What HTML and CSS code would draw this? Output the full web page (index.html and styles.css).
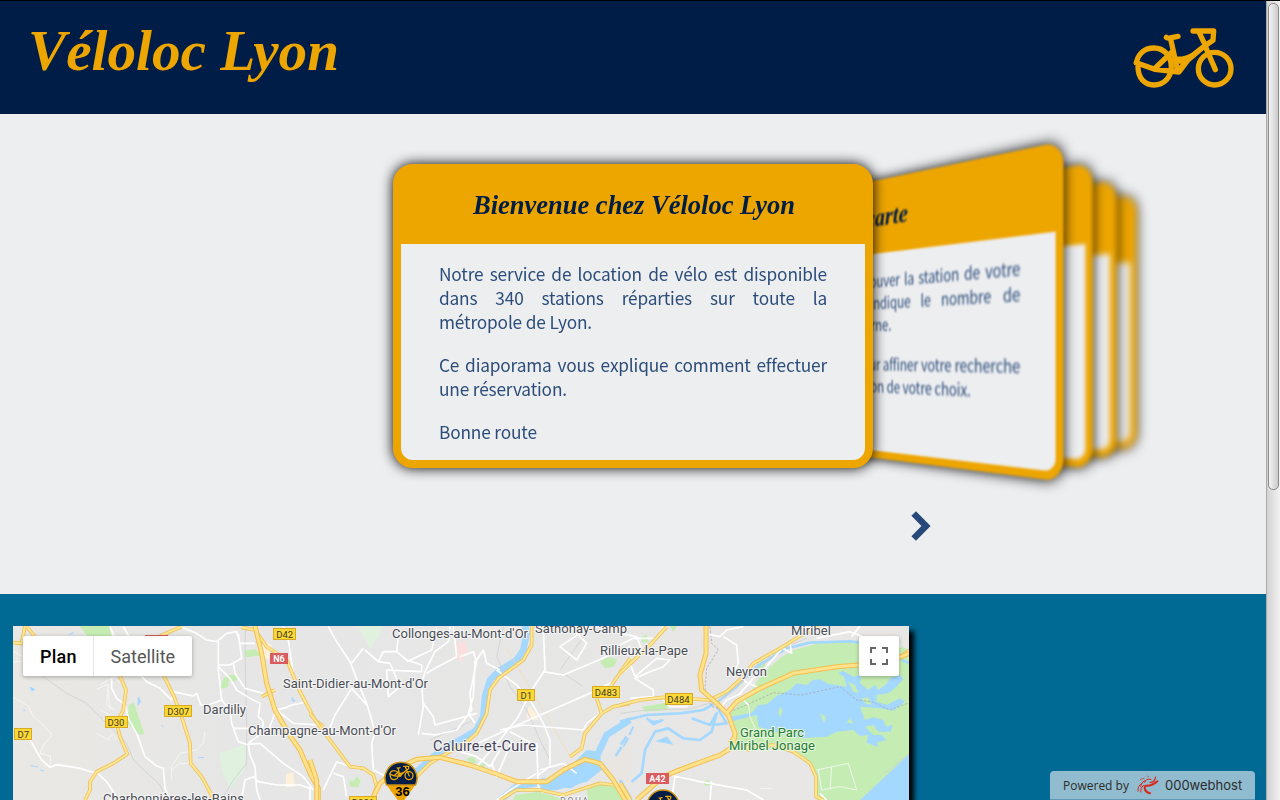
FILE: index.html
```html
<!DOCTYPE html>
<html lang="fr">
<head>
<meta charset="utf-8">
<title>Véloloc Lyon</title>
<link rel="stylesheet" href="styles.css">
</head>
<body>
<div class="window">
<div class="page">
  <header class="header">
    <h1 class="brand"><svg class="script" width="330" height="90" viewBox="0 0 330 90"><text x="15" y="57" textLength="311" lengthAdjust="spacingAndGlyphs">Véloloc Lyon</text></svg></h1>
    <svg class="bike" viewBox="100 80 306 186">
      <g id="bike" fill="none" stroke="#eda500" stroke-width="16" stroke-linecap="round" stroke-linejoin="round">
        <path d="M110 187C116 158 136 143 163 143C194 143 215 169 215 199C215 231 192 254 163 254C134 254 115 232 115 200"/>
        <circle cx="345" cy="205" r="49"/>
        <path d="M110 187L165 207L238 215L264 180L317 135L297 93M167 203L217 155M200 111Q205 115 216 112L235 108M213 116L233 207M226 176Q252 180 280 164L317 135M233 182H258L238 212M280 92H298L342 92L340 120L316 136L347 208"/>
      </g>
    </svg>
  </header>

  <section class="slider">
    <article class="card card-5"><div class="card-head"></div></article>
    <article class="card card-4"><div class="card-head"></div></article>
    <article class="card card-3"><div class="card-head"></div></article>
    <article class="card card-2">
      <h2 class="card-head"><svg class="script" width="480" height="80" viewBox="0 0 480 80"><text x="188" y="50" textLength="104" lengthAdjust="spacingAndGlyphs">La carte</text></svg></h2>
      <div class="card-body">
        <p><span class="full">La carte permet de retrouver la station de votre</span><span class="full">choix. Un marqueur indique le nombre de</span>vélos disponibles par borne.</p>
        <p><span class="full">Vous pouvez zoomer pour affiner votre recherche</span><span>puis sélectionner la station de votre choix.</span></p>
      </div>
    </article>
    <article class="card card-1">
      <h2 class="card-head"><svg class="script" width="480" height="80" viewBox="0 0 480 80"><text x="80" y="50" textLength="322" lengthAdjust="spacingAndGlyphs">Bienvenue chez Véloloc Lyon</text></svg></h2>
      <div class="card-body">
        <p><span class="full">Notre service de location de vélo est disponible</span><span class="full">dans 340 stations réparties sur toute la</span>métropole de Lyon.</p>
        <p><span class="full">Ce diaporama vous explique comment effectuer</span>une réservation.</p>
        <p>Bonne route</p>
      </div>
    </article>
    <svg class="next" viewBox="0 0 20 30"><path d="M2.700 2.500L15 15L2.700 27.500" fill="none" stroke="#26497a" stroke-width="6.500"/></svg>
  </section>

  <main class="booking">
    <div class="map">
      <svg class="tiles" viewBox="13 626 896 174">
        <defs>
          <linearGradient id="land" x1="0" x2="1"><stop offset="0" stop-color="#e9e8e4"/><stop offset=".25" stop-color="#e6e6e6"/><stop offset="1" stop-color="#e8e7e6"/></linearGradient>
        </defs>
        <rect x="13" y="626" width="896" height="174" fill="url(#land)"/>

        <!-- west -->
        <g transform="translate(0 610) scale(.33333)">
          <g fill="#c5edb3">
            <path d="M238 48H330L333 78H262Z"/>
            <path d="M386 284L402 279L432 368L428 376L410 370L384 340Z"/>
            <path d="M732 122L765 118L785 136L740 142ZM670 205L690 194L720 198L706 214L686 214L684 232L660 238Z"/>
          </g>
          <path d="M658 430L730 405L740 418L733 480L690 535L672 500Z" fill="#e0f2df"/>
          <path d="M785 90L815 105L808 150L785 140ZM858 492L880 487L885 530L858 532Z" fill="#fdf1dc"/>
          <path d="M90 232l14 6l-8 5zM415 262l7 12l-8 12zM876 262l9 12l-8 -2zM92 467l22 4M120 480l12 3M70 300l6 3M484 346l6 5M594 443h18M208 74l12-6z" fill="#a5d6ff" stroke="#a5d6ff" stroke-width="3"/>
          <g class="track"><path d="M130 200L200 250L260 280L310 330L380 400L400 450L480 525L500 570M737 50L735 130L740 350V460L700 510L670 560"/></g>
          <g class="lane">
            <path d="M40 262L85 288L100 320L130 345L157 375L130 405L120 430L152 438L150 470M300 225L340 202L370 225M290 238L325 222L320 285L345 300M300 300L325 312L310 330M325 240L330 300M290 370L325 390L335 372L350 385M615 365L610 400L590 420L540 430L515 470V508M515 480L535 462L565 460L568 445M40 125L70 140M40 155H70"/>
          </g>
          <g class="street">
            <path d="M90 390L125 450L150 472L170 464L240 475L295 492L320 515L340 545L355 570"/>
            <path d="M330 50L355 110L380 150L440 215L480 235L515 270L520 245L580 258L590 250L602 285L625 285L665 270L690 300L695 340L715 395L745 405L750 435L765 470L770 540L780 570"/>
            <path d="M370 50L410 120L440 200M335 205V235L350 265L375 285L385 325L410 370L435 440L470 468L490 475L495 535L510 570"/>
            <path d="M540 50L590 70L620 90L650 95L680 70L710 65L720 100H765M655 90V180L665 270M715 70L725 145L690 165H655M655 170L690 205L710 240L750 265L780 280L775 320L790 335L785 370L745 400M700 155L705 190L735 235L790 250M830 300L860 292L875 285L910 278M830 300L880 340L960 345M700 355H770L800 375L825 310M725 565L735 510L760 500L775 515L830 525L900 525L930 535L930 570M850 50L865 90L880 195M745 403L780 400L850 460L910 500L940 540"/>
          </g>
          <g class="road-o"><path d="M75 48L65 100L40 98M80 50L105 80M480 78L545 50M360 198L378 240L370 300L350 340L360 380L382 432L340 460L290 485L270 515V540L255 570M492 198L522 260L545 320L570 400L572 460L605 500L635 555V570M725 52L765 60L800 110L860 150L900 245L945 330L970 350M785 260L825 240"/></g>
          <g class="road"><path d="M75 48L65 100L40 98M80 50L105 80M480 78L545 50M360 198L378 240L370 300L350 340L360 380L382 432L340 460L290 485L270 515V540L255 570M492 198L522 260L545 320L570 400L572 460L605 500L635 555V570M725 52L765 60L800 110L860 150L900 245L945 330L970 350M785 260L825 240"/></g>
          <path class="hwy-o" d="M765 48L785 130L800 220L825 300L865 370L900 420L930 490L955 535V570"/>
          <path class="hwy" d="M765 48L785 130L800 220L825 300L865 370L900 420L930 490L955 535V570"/>
        </g>

        <!-- centre -->
        <g transform="translate(310 610) scale(.33333)">
          <path d="M145 48H218L210 75L180 115Z" fill="#e0f2df"/>
          <path d="M440 100L465 93L475 125L455 155L437 140Z" fill="#fbdfdf"/>
          <path d="M655 288L675 305L685 330L650 325Z" fill="#fdf1dc"/>
          <path d="M870 155L890 140L922 148L912 170L885 175ZM118 510L130 515L140 498L152 512L145 532L120 530ZM470 445L492 440L500 460L480 460ZM510 462L527 460L522 478ZM615 555L690 545L750 565V570H610ZM830 540L860 520L920 525L935 540L960 548V570H835Z" fill="#c5edb3"/>
          <path d="M890 470L960 380V560L930 520Z" fill="#e9e6e2"/>
          <path class="river" d="M645 45L650 70L640 120L620 150L565 185L540 210L525 260L520 320L500 360L460 385L410 410L370 440L320 485L270 540"/>
          <path class="river" d="M570 570L620 530L700 515L780 525L840 490L860 440L890 375L960 330"/>
          <path d="M690 530L735 500L790 460L830 420L870 425L875 480L830 515L740 540L670 545Z" fill="#a5d8fe"/>
          <path d="M950 380l-18 24M935 410l-18 28" stroke="#a5d8fe" stroke-width="8"/>
          <g class="track"><path d="M580 50L560 140L600 230L650 300L690 390L720 450V480M360 390L450 350L490 330M750 180L835 60M760 190L820 230"/></g>
          <path d="M590 115L700 300L780 440" fill="none" stroke="#f0dfaa" stroke-width="2"/>
          <g class="street">
            <path d="M55 50L80 95L120 155L130 180L145 220L170 280L185 330L195 370L185 400L190 480L230 500M160 115L125 160M165 120L205 155L220 125H260L265 80L310 60M260 125L290 150L335 165L335 185L230 180L235 260L270 230L240 160L205 155"/>
            <path d="M380 55L365 120L290 155M420 50L415 95L375 125L345 185L335 220L340 290L325 375M430 50L440 140L375 175L350 190M450 140L490 125L500 155L480 250L485 300L440 360L375 375L335 370M500 150L520 120L530 160L570 180M495 150L490 260L475 310L495 340M340 280L370 320L375 345L500 310M55 365L75 315L125 235L175 290"/>
            <path d="M700 50L705 180L665 240L625 320L570 390L500 470M700 185L760 195L960 110M560 180L620 225L660 270L700 340L720 390V470L685 495M570 360L640 345L820 360L830 340L870 310M960 170L900 220L840 250L600 355L450 425L500 440L540 470L570 420M780 50L830 100L800 150L750 110L840 50M680 400L685 530L700 550M605 395L560 500L545 460M685 410L600 365M690 480L760 460L800 490M680 490L600 540L560 570M40 540L80 455L150 480M70 490L100 500L110 560"/>
          </g>
          <g class="road-o"><path d="M0 310L60 390L120 470L160 475L190 495L200 530L185 570M665 48V105L640 150L565 205L540 240L530 310L500 370L465 400L410 430L360 460L310 510M960 280L910 290L875 310L825 370L815 415L780 440M875 310L860 265M905 225L960 145M570 570L620 540H690L760 555L870 520L910 525"/></g>
          <g class="road"><path d="M0 310L60 390L120 470L160 475L190 495L200 530L185 570M665 48V105L640 150L565 205L540 240L530 310L500 370L465 400L410 430L360 460L310 510M960 280L910 290L875 310L825 370L815 415L780 440M875 310L860 265M905 225L960 145M570 570L620 540H690L760 555L870 520L910 525"/></g>
          <path class="hwy-o" d="M0 450L20 510V570M185 570L210 520L260 475L320 448L390 442L480 465L560 492L620 515H710L760 480L825 448L870 460L910 510L945 570"/>
          <path class="hwy" d="M0 450L20 510V570M185 570L210 520L260 475L320 448L390 442L480 465L560 492L620 515H710L760 480L825 448L870 460L910 510L945 570"/>
        </g>

        <!-- east -->
        <g transform="translate(620 610) scale(.33333)">
          <path d="M870 120L810 98L690 92L600 98L520 120L480 145L445 175L420 200L390 250L330 310L345 400L410 415L520 420L580 480L590 570H730L870 430Z" fill="#c5edb3"/>
          <path d="M65 290L140 278L145 300L75 305ZM62 80L80 75L85 95L68 98ZM150 48H170L160 65ZM250 515L265 509L275 525L255 528ZM410 160L435 152L438 170L410 180Z" fill="#c5edb3"/>
          <path d="M720 570L868 432V570Z" fill="#a5d8fe"/>
          <path d="M325 322L395 308L415 285L440 283L470 258L510 240L530 220L560 225L580 209L600 208L625 222L650 225L680 230L672 200L655 190L668 182L700 200L725 195L720 220L745 240L765 225L775 240L800 222L810 205L840 195L850 208L825 235L805 250L770 255L770 275L800 285L840 265L855 275L820 302L780 295L720 290L735 330L760 322L790 330L798 350L818 345L812 365L775 365L760 345L735 350L760 375L785 375L800 390L770 398L775 412L740 398L745 375L720 378L700 360L650 365L620 380L540 385L480 370L415 350L410 315L330 335Z" fill="#a5d8fe"/>
          <path d="M685 215L705 225L715 250L700 245ZM725 265L745 262L755 285L735 280ZM600 310L618 320L612 340ZM480 290L488 300L482 320L475 310ZM690 325L700 340L680 338Z" fill="#c5edb3"/>
          <path class="stream" d="M0 335L80 315L180 310L250 300L300 270L350 230L410 170L500 115L570 98L690 94L740 100L868 160"/>
          <path class="stream" d="M0 510L35 570M35 515L65 490L75 420L105 365L145 355L190 385L240 390L275 365L290 310L270 345L215 325M290 290L320 340L275 345"/>
          <path d="M40 350l-12 25M25 385l-15 25M80 325l18 10l32 -5l-30 14zM115 393l25 -10l13 17z" fill="#a5d8fe" stroke="#a5d8fe" stroke-width="6"/>
          <path d="M270 50L275 100L295 120L260 175L255 240L275 290L305 295L320 310L390 280L460 248L545 255L660 230L710 270L755 275L810 300L868 278" fill="none" stroke="#a8a8b5" stroke-width="2.500" stroke-dasharray="7 5"/>
          <path class="track" d="M0 310L80 300L210 297L300 270L420 170L500 110L560 85M870 430L795 490"/>
          <g class="street">
            <path d="M0 70L50 80L70 130L30 160L45 200L110 145L150 150L130 170L90 185L45 205L100 240V260L30 265M0 105L40 85L110 85L130 50M250 70L300 80L320 60L370 50M310 80L350 105L355 160L345 180L370 195L375 215L410 230M360 250L400 205L430 180L500 100M480 110L515 130L510 100M590 85L690 65L730 80L750 110L840 110M695 80L720 48M130 270L150 290H200L205 270M300 295L320 270L365 250M370 270L385 285M150 495L240 515L380 540L430 570M165 500L155 570M275 515L270 570M600 550L620 570"/>
          </g>
          <path class="lane" d="M385 280L390 320L410 365L445 400M590 480L685 460L710 540L660 530L605 540L595 480M635 470L630 540M420 535H455"/>
          <g class="road-o"><path d="M0 190L90 105L140 50M0 285L60 270L130 262L270 270L320 245L360 210L400 160L480 115L545 75L600 50M290 275L320 310M390 410L460 405L520 425L570 460L588 500V560L610 570M868 120L830 150"/></g>
          <g class="road"><path d="M0 190L90 105L140 50M0 285L60 270L130 262L270 270L320 245L360 210L400 160L480 115L545 75L600 50M290 275L320 310M390 410L460 405L520 425L570 460L588 500V560L610 570M868 120L830 150"/></g>
          <path class="hwy-o" d="M258 48V130L240 195L245 240L290 280L325 315L345 370L340 410L300 435L190 475L130 500L50 570M868 130L800 158L650 170L520 190L420 235L350 275L320 310M0 520L30 570M345 380L330 400M350 395L390 420"/>
          <path class="hwy" d="M258 48V130L240 195L245 240L290 280L325 315L345 370L340 410L300 435L190 475L130 500L50 570M868 130L800 158L650 170L520 190L420 235L350 275L320 310M0 520L30 570M345 380L330 400M350 395L390 420"/>
        </g>

        <g class="shield">
          <rect x="273.500" y="628.500" width="22" height="11"/><text x="284.700" y="637.600">D42</text>
          <rect x="164.500" y="705.500" width="27" height="11"/><text x="178.300" y="714.600">D307</text>
          <rect x="105.500" y="716.500" width="22" height="11"/><text x="116" y="725.600">D30</text>
          <rect x="14.500" y="728.500" width="17" height="11"/><text x="23.300" y="737.600">D7</text>
          <rect x="517.500" y="689.500" width="17" height="11"/><text x="526.300" y="698.600">D1</text>
          <rect x="592.500" y="686.500" width="27" height="11"/><text x="606" y="695.600">D483</text>
          <rect x="665.500" y="693.500" width="27" height="11"/><text x="678.500" y="702.600">D484</text>
          <rect x="349.500" y="796.500" width="27" height="11"/><text x="363" y="805.600">D901</text>
        </g>
        <g class="shield red">
          <rect x="270" y="653" width="18" height="11"/><text x="279" y="662">N6</text>
          <rect x="646" y="773" width="23" height="11"/><text x="657.500" y="782.200">A42</text>
          <rect x="145" y="635" width="23" height="11"/>
        </g>
        <g class="place">
          <text x="392" y="637.500" textLength="136">Collonges-au-Mont-d'Or</text>
          <text x="535" y="633" textLength="92">Sathonay-Camp</text>
          <text x="791" y="634.500" textLength="40">Miribel</text>
          <text x="600" y="654.500" textLength="88">Rillieux-la-Pape</text>
          <text x="726" y="675.500" textLength="41">Neyron</text>
          <text x="283" y="687.500" textLength="145">Saint-Didier-au-Mont-d'Or</text>
          <text x="203" y="714" textLength="43">Dardilly</text>
          <text x="248" y="735" textLength="148">Champagne-au-Mont-d'Or</text>
          <text x="103" y="802.500" textLength="141">Charbonnières-les-Bains</text>
          <text class="town" x="433" y="751" textLength="103">Caluire-et-Cuire</text>
          <text class="park" x="740" y="737" textLength="64">Grand Parc</text>
          <text class="park" x="729" y="750" textLength="86">Miribel Jonage</text>
          <text class="area" x="560" y="804" textLength="28">DOUA</text>
        </g>
        <g>
          <path d="M384.500 778C386 788 396 795 401 806C406 795 416 788 417.500 778Z" fill="#eda500"/>
          <path d="M386.500 785A16 16 0 1 1 415.500 785Z" fill="#001d48" stroke="#c98f10" stroke-width="1.500"/>
          <svg x="389" y="765" width="25" height="16" viewBox="100 80 306 186"><use href="#bike"/></svg>
          <text class="count" x="402.500" y="796">36</text>
          <circle cx="663" cy="806" r="16" fill="#001d48" stroke="#c98f10" stroke-width="1.500"/>
          <svg x="651" y="795" width="25" height="16" viewBox="100 80 306 186"><use href="#bike"/></svg>
        </g>
      </svg>
      <div class="controls">
        <div class="types"><span class="type active">Plan</span><span class="type">Satellite</span></div>
        <div class="full-btn"><svg width="18" height="18" viewBox="0 0 18 18"><path d="M1 6V1H6M12 1H17V6M17 12V17H12M6 17H1V12" fill="none" stroke="#666" stroke-width="2"/></svg></div>
      </div>
    </div>
  </main>
</div>
<div class="scrollbar"><div class="thumb"></div></div>
<div class="host">
  <span class="by">Powered by</span>
  <svg width="24" height="20" viewBox="0 0 72 60" fill="none" stroke="#d8281c" stroke-linecap="round"><path d="M26 36Q25 50 42 55" stroke-width="6"/><path d="M28 32Q48 34 64 19" stroke-width="6"/><path d="M42 22Q55 24 59 6" stroke-width="3.500"/><path d="M25 22Q31 9 45 13" stroke-width="3"/><path d="M14 34Q17 18 29 17M6 49Q4 32 18 25M14 51Q12 39 22 31" stroke-width="3"/><path d="M13 14L25 9M34 3L38 5" stroke-width="2"/></svg>
  <span class="hostname">000webhost</span>
</div>
</div>
</body>
</html>
```

FILE: styles.css
```css
* { box-sizing: border-box; }
body { margin: 0; background: #edeef0; font-family: "Noto Sans CJK SC", sans-serif; }
.window { position: relative; display: flex; width: 1280px; height: 800px; overflow: hidden; border-top: 1px solid #000; }
.page { width: 1266px; height: 799px; overflow: hidden; }

.header { display: flex; justify-content: space-between; height: 113px; padding: 12px 31px 0 13px; background: #001d48; }
.brand { margin: 0; height: 90px; }
.script { display: block; overflow: visible; font-family: "Liberation Serif", serif; font-style: italic; font-weight: bold; }
.brand .script { font-size: 56px; fill: #eda500; }
.bike { width: 102px; height: 62px; margin-top: 14px; }

.slider { position: relative; height: 480px; perspective: 1000px; background: #edeef0; overflow: hidden; }
.card { position: absolute; top: 50px; left: 393px; width: 480px; height: 304px; border: 8px solid #eda500; border-radius: 20px; background: #edeef0; box-shadow: 0 0 13px #000; color: #2c4d7a; }
.card-head { height: 72px; margin: 0; background: #eda500; }
.card-head .script { margin: 0 -8px; transform: translateY(-8px); font-size: 28px; fill: #001d48; }
.card-body { padding: 18px 38px 0; font-size: 17.300px; line-height: 24px; letter-spacing: -.17px; text-align: justify; }
.card-body p { margin: 0 0 19.200px; }
.card-body span { display: block; white-space: nowrap; }
.card-body .full { text-align-last: justify; }
.card-2 { transform: translate3d(264px, 0, -100px) rotateY(-60deg); filter: blur(1px); }
.card-3 { transform: translate3d(336px, 0, -200px) rotateY(-60deg); filter: blur(2px); }
.card-4 { transform: translate3d(408px, 0, -300px) rotateY(-60deg); filter: blur(3px); }
.card-5 { transform: translate3d(480px, 0, -400px) rotateY(-60deg); filter: blur(4px); }
.next { position: absolute; left: 911px; top: 397px; width: 20px; height: 30px; }

.booking { height: 206px; padding: 32px 0 0 13px; background: #006a94; }
.map { position: relative; width: 896px; height: 174px; box-shadow: 5px 5px 5px #000; }
.tiles { display: block; width: 896px; height: 174px; font-family: Roboto, sans-serif; }
.street, .lane, .track, .road, .road-o, .hwy, .hwy-o, .river, .stream { fill: none; stroke-linejoin: round; }
.street { stroke: #fff; stroke-width: 5; }
.lane { stroke: #f8f8f6; stroke-width: 2.500; }
.track { stroke: #cfd0d2; stroke-width: 2.500; }
.road-o { stroke: #efc15a; stroke-width: 11; }
.road { stroke: #ffe793; stroke-width: 6; }
.hwy-o { stroke: #f3bf50; stroke-width: 15; }
.hwy { stroke: #ffe28c; stroke-width: 9; }
.river { stroke: #a5d8fe; stroke-width: 20; }
.stream { stroke: #a5d8fe; stroke-width: 8; }
.shield rect { fill: #fdd835; stroke: #d6aa24; }
.shield text { font-size: 9.500px; text-anchor: middle; fill: #3c3c32; }
.shield.red rect { fill: #db5b5e; stroke: none; }
.shield.red text { font-size: 9px; fill: #fff; font-weight: bold; }
.place text { font-size: 13px; fill: #4a4d55; stroke: #f5f5f5; stroke-width: 2px; paint-order: stroke; }
.place .town { font-size: 14.500px; fill: #45435a; }
.place .park { fill: #267b35; stroke: #e6f6df; }
.place .area { font-size: 9px; fill: #777c88; }
.count { font: bold 13px "Liberation Sans", sans-serif; text-anchor: middle; }
.controls { position: absolute; inset: 10px 10px auto; display: flex; justify-content: space-between; font-family: Roboto, sans-serif; font-size: 18px; line-height: 40px; }
.types { display: flex; height: 40px; border-radius: 2px; background: #fff; box-shadow: 0 1px 4px rgba(0, 0, 0, .3); }
.type { padding: 1px 17px 0; color: #565656; }
.type.active { padding-right: 16px; border-right: 1px solid #e6e6e6; color: #000; font-weight: 500; letter-spacing: .2px; }
.full-btn { display: flex; align-items: center; justify-content: center; width: 40px; height: 40px; border-radius: 2px; background: #fff; box-shadow: 0 1px 4px rgba(0, 0, 0, .3); }

.scrollbar { width: 14px; height: 799px; padding: 2px 1px 0; border-left: 1px solid #aaa; background: linear-gradient(90deg, #d2d2d2, #f2f2f2); }
.thumb { width: 11px; height: 487px; border: 1px solid #8b8b8b; border-radius: 5px; background: linear-gradient(90deg, #f3f3f3, #cacaca); }
.host { position: absolute; left: 1050px; bottom: 0; display: flex; align-items: center; width: 205px; height: 29px; padding-left: 13px; border-radius: 4px 4px 0 0; background: #91bccf; border-bottom: 1px solid #5c9ab6; color: #2b2b2b; font: 12px "Open Sans", sans-serif; }
.by { width: 73px; white-space: nowrap; }
.hostname { margin-left: 5px; font-family: Inter, sans-serif; font-size: 13px; }
```
